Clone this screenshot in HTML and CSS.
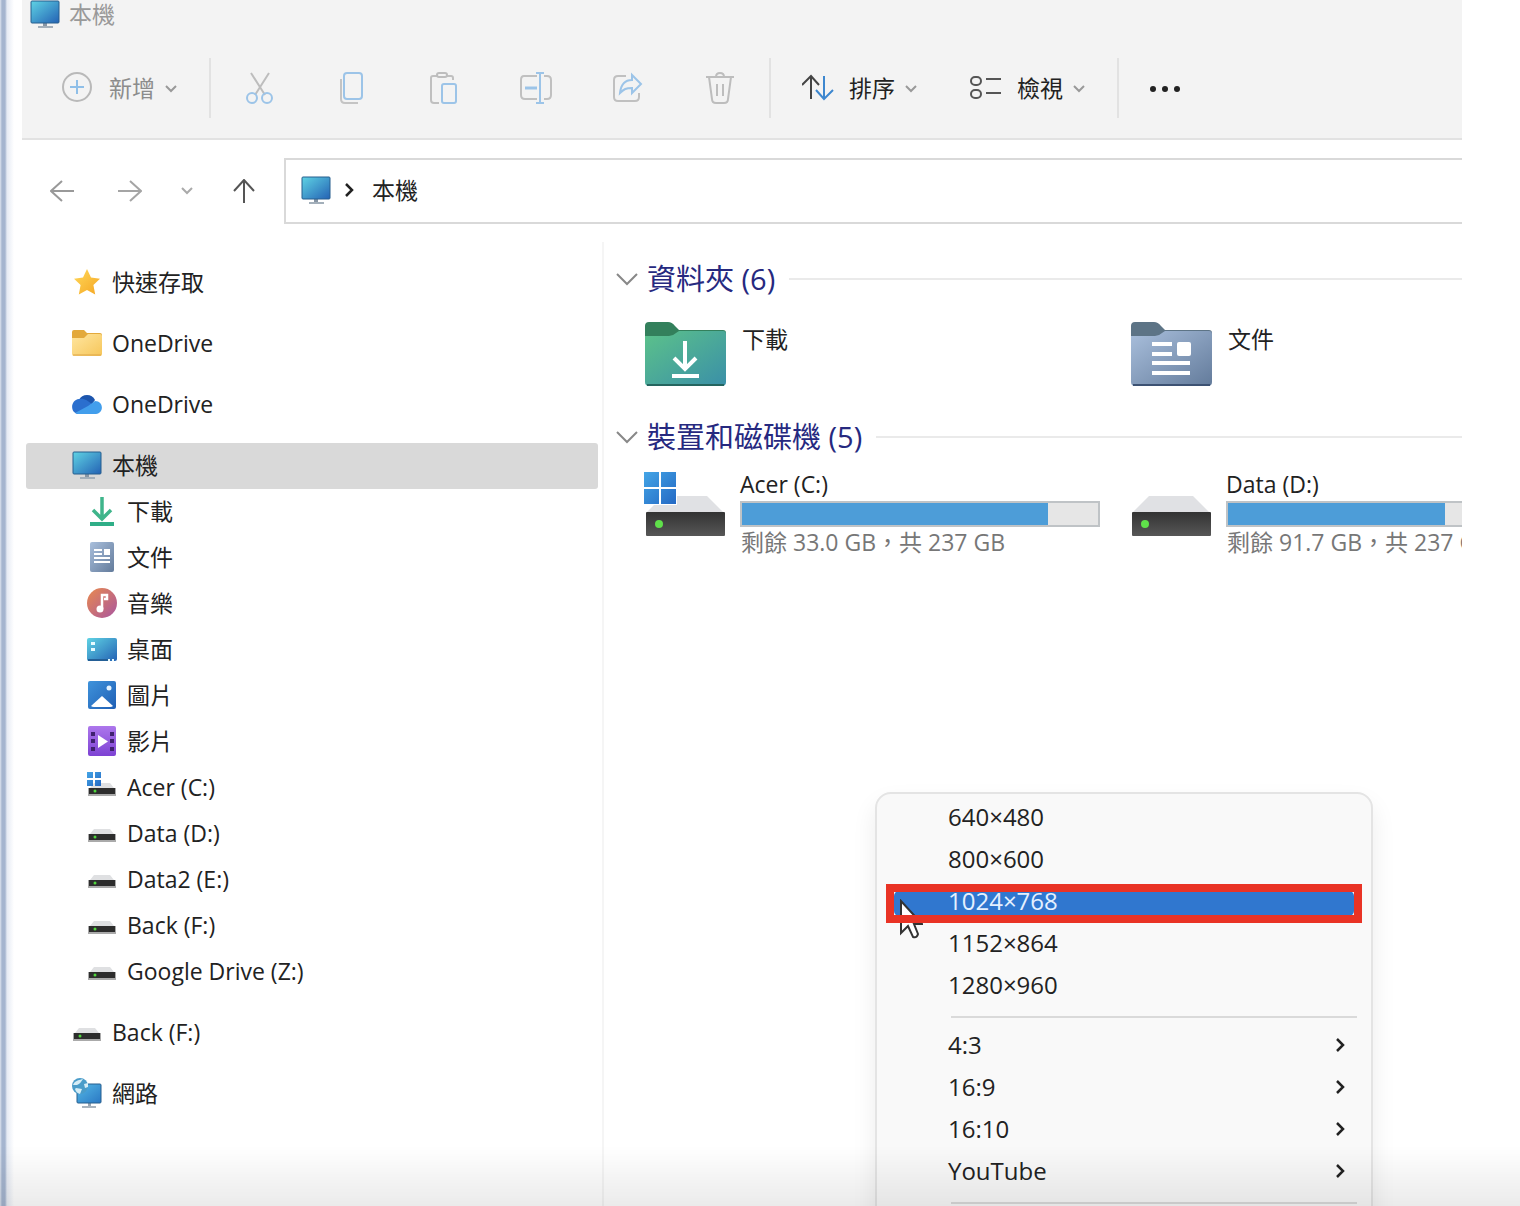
FILE: index.html
```html
<!DOCTYPE html>
<html lang="zh-Hant">
<head>
  <meta charset="UTF-8">
  <meta name="viewport" content="width=device-width, initial-scale=1.0">
  <title>本機</title>
  <link rel="stylesheet" href="styles.css">
</head>
<body>
  <!-- shared icons -->
  <svg class="sprite" aria-hidden="true">
    <defs>
      <linearGradient id="gScreen" x1="0" y1="0" x2="1" y2="1"><stop offset="0" stop-color="#5fd3e4"/><stop offset="1" stop-color="#2462b4"/></linearGradient>
      <linearGradient id="gStar" x1="0" y1="0" x2="1" y2="1"><stop offset="0" stop-color="#ffd95a"/><stop offset="1" stop-color="#f5a623"/></linearGradient>
      <linearGradient id="gFolder" x1="0" y1="0" x2="1" y2="1"><stop offset="0" stop-color="#ffe6a0"/><stop offset="1" stop-color="#f6c65a"/></linearGradient>
      <linearGradient id="gGreen" x1="0" y1="0" x2="1" y2="1"><stop offset="0" stop-color="#5cc28a"/><stop offset="1" stop-color="#3a8fa8"/></linearGradient>
      <linearGradient id="gDoc" x1="0" y1="0" x2="1" y2="1"><stop offset="0" stop-color="#a9bfdc"/><stop offset="1" stop-color="#637b9b"/></linearGradient>
      <linearGradient id="gMusic" x1="0" y1="0" x2="1" y2="1"><stop offset="0" stop-color="#e98a4e"/><stop offset="1" stop-color="#a9569f"/></linearGradient>
      <linearGradient id="gPic" x1="0" y1="0" x2="1" y2="1"><stop offset="0" stop-color="#3f93db"/><stop offset="1" stop-color="#1f5fb5"/></linearGradient>
      <linearGradient id="gNet" x1="0" y1="0" x2="1" y2="1"><stop offset="0" stop-color="#55b9e6"/><stop offset="1" stop-color="#2a78c4"/></linearGradient>
      <linearGradient id="gVideo" x1="0" y1="0" x2="0" y2="1"><stop offset="0" stop-color="#ad77ec"/><stop offset="1" stop-color="#7d42d3"/></linearGradient>
      <linearGradient id="gWin" x1="0" y1="0" x2="1" y2="1"><stop offset="0" stop-color="#44a5e6"/><stop offset="1" stop-color="#2469c4"/></linearGradient>
      <linearGradient id="gDrive" x1="0" y1="0" x2="0" y2="1"><stop offset="0" stop-color="#333"/><stop offset="1" stop-color="#575757"/></linearGradient>
    </defs>

    <symbol id="i-pc" viewBox="0 0 30 30">
      <path d="M13 24h4v4h-4z" fill="#8896a5"/><path d="M8 27h15v2H8z" fill="#a3afba"/>
      <rect x="1" y="2" width="28" height="22" rx="1" fill="url(#gScreen)" stroke="#275f8e"/>
    </symbol>
    <symbol id="i-star" viewBox="0 0 30 30">
      <path d="M15 2l4 8.500 9 1.200-6.600 6.300 1.800 9.500L15 23l-8.200 4.500L8.600 18 2 11.700l9-1.200z" fill="url(#gStar)"/>
    </symbol>
    <symbol id="i-folder" viewBox="0 0 30 30">
      <path d="M0 4q0-2 2-2h10l3 3h13q2 0 2 2v9H0z" fill="#e3a93b"/>
      <path d="M0 10h12l4-4h12q2 0 2 2v18q0 2-2 2H2q-2 0-2-2z" fill="url(#gFolder)"/><path d="M1 27h28" stroke="#dda548"/>
    </symbol>
    <symbol id="i-cloud" viewBox="0 0 30 30">
      <path d="M7 11a9 9 0 0 1 16 0l-6 8z" fill="#1c55ad"/>
      <path d="M7 10c5-1 8 1 14 6L8 25H6C-2 24-2 11 7 10z" fill="#2b6fce"/>
      <path d="M3 24l13-7 7-5c9 0 9 12 1 13H6z" fill="#429eec"/>
    </symbol>
    <symbol id="i-down" viewBox="0 0 30 30">
      <path d="M15 1v22M6 14l9 9 9-9" fill="none" stroke="#3fb58b" stroke-width="3.500"/>
      <path d="M3 28h24" stroke="#2fae87" stroke-width="4"/>
    </symbol>
    <symbol id="i-doc" viewBox="0 0 30 30">
      <rect x="3" y="0" width="24" height="30" rx="2" fill="url(#gDoc)"/>
      <path d="M7 8h8M7 12h8M7 16h16M7 20h16" stroke="#fff" stroke-width="2"/><path d="M17 7h6v6h-6z" fill="#fff"/>
    </symbol>
    <symbol id="i-music" viewBox="0 0 30 30">
      <circle cx="15" cy="15" r="15" fill="url(#gMusic)"/>
      <circle cx="13" cy="21" r="3.500" fill="#fff"/><path d="M15 21V7h5v4h-3" fill="none" stroke="#fff" stroke-width="2.500"/>
    </symbol>
    <symbol id="i-desktop" viewBox="0 0 30 30">
      <rect y="4" width="30" height="23" rx="2" fill="url(#gScreen)"/><path d="M1 26h21" stroke="#245f96" stroke-width="2"/>
      <path d="M4 8h4v3H4zM4 14h4v3H4zM21 25h2v2h-2zM25 25h2v2h-2z" fill="#e6fbff"/>
    </symbol>
    <symbol id="i-pic" viewBox="0 0 30 30">
      <rect x="1" y="1" width="28" height="28" rx="2" fill="url(#gPic)"/>
      <path d="M4 26l11-10 11 10q-1 1-3 1H7q-2 0-3-1z" fill="#fff"/><circle cx="22" cy="8" r="2.500" fill="#e4f3ff"/>
    </symbol>
    <symbol id="i-video" viewBox="0 0 30 30">
      <rect x="1" y="0" width="28" height="30" rx="2" fill="url(#gVideo)"/>
      <path d="M4 6h4v4H4zM4 13h4v4H4zM4 21h4v4H4zM23 6h4v4h-4zM23 13h4v4h-4zM23 21h4v4h-4z" fill="#40206f"/>
      <path d="M11 9l10 6.500L11 22z" fill="#fff"/>
    </symbol>
    <symbol id="i-drive" viewBox="0 0 30 30">
      <path d="M7 11h16l4 5H3z" fill="#dfe0e2"/><rect x="1" y="16" width="28" height="8" fill="#aaa"/>
      <rect x="2" y="16" width="26" height="6" fill="#2d2d2d"/><circle cx="8" cy="19" r="1.500" fill="#4fd63c"/>
    </symbol>
    <symbol id="i-sysdrive" viewBox="0 0 30 30">
      <path d="M7 11h16l4 5H3z" fill="#dfe0e2"/><rect x="1" y="16" width="28" height="8" fill="#aaa"/>
      <rect x="2" y="16" width="26" height="6" fill="#2d2d2d"/><circle cx="8" cy="19" r="1.500" fill="#4fd63c"/>
      <path d="M0 0h6v6H0zM8 0h6v6H8zM0 8h6v6H0zM8 8h6v6H8z" fill="url(#gWin)"/>
    </symbol>
    <symbol id="i-net" viewBox="0 0 30 30">
      <path d="M16 25h3v4h-3z" fill="#9aa7b4"/><path d="M10 28h14v2H10z" fill="#a9b4be"/>
      <rect x="5" y="6" width="24" height="19" rx="1" fill="url(#gNet)" stroke="#275f8e"/>
      <circle cx="8" cy="8" r="8" fill="#4a9cc9"/><path d="M1 7c2-5 7-5 10-6-2 3-3 5-6 6zM4 10l6 1-2 5q-4-1-5-5zM12 6l4-1v4l-3 1z" fill="#d5edf6"/>
    </symbol>
    <symbol id="i-chev" viewBox="0 0 14 14"><path d="M2 5l5 5 5-5" fill="none" stroke="currentColor" stroke-width="2"/></symbol>
    <symbol id="i-chev-r" viewBox="0 0 14 14"><path d="M4 1l6 6-6 6" fill="none" stroke="currentColor" stroke-width="2.500"/></symbol>
  </svg>

  <div class="window">
    <header class="ribbon">
      <div class="title"><svg class="icon"><use href="#i-pc"/></svg><span>本機</span></div>
      <div class="toolbar">
        <button class="tool disabled" type="button">
          <svg class="tool-icon" viewBox="0 0 32 32"><circle cx="15" cy="15" r="14" fill="none" stroke="#b9b9b9" stroke-width="2"/><path d="M15 8v14M8 15h14" stroke="#8fbfe8" stroke-width="2"/></svg>
          新增<svg class="chev"><use href="#i-chev"/></svg>
        </button>
        <span class="sep"></span>
        <div class="tool-group">
          <button type="button" aria-label="剪下"><svg viewBox="0 0 32 32"><path d="M7 1l14 22M25 1L11 23" stroke="#bdbdbd"/><g stroke="#9cc4e8"><circle cx="8" cy="26" r="5"/><circle cx="23" cy="26" r="5"/></g></svg></button>
          <button type="button" aria-label="複製"><svg viewBox="0 0 32 32"><path d="M5 7v20q0 4 4 4h13" stroke="#c4c4c4"/><rect x="8" y="1" width="18" height="26" rx="3" stroke="#9cc4e8"/></svg></button>
          <button type="button" aria-label="貼上"><svg viewBox="0 0 32 32"><path d="M10 4H5q-2 0-2 2v22q0 3 3 3h5M19 4h4q2 0 2 2v2" stroke="#c0c0c0"/><rect x="9" y="1" width="10" height="4" rx="2" stroke="#bdbdbd"/><rect x="14" y="12" width="14" height="19" rx="2" stroke="#9cc4e8"/></svg></button>
          <button type="button" aria-label="重新命名"><svg viewBox="0 0 32 32"><path d="M17 4H4Q1 4 1 8v15q0 4 4 4h12M24 4h3q4 0 4 4v15q0 4-4 4h-3" stroke="#c0c0c0"/><path d="M20 2v28M16 1h8M16 31h8" stroke="#9cc4e8"/><path d="M5 16h12" stroke="#9cc4e8" stroke-width="3"/></svg></button>
          <button type="button" aria-label="共用"><svg viewBox="0 0 32 32"><path d="M14 4H6Q2 4 2 8v17q0 4 4 4h17q4 0 4-4v-4" stroke="#c0c0c0"/><path d="M8 21C9 12 13 8 20 8V3l9 9-9 9v-5c-6 0-8 1-12 5z" stroke="#9cc4e8"/></svg></button>
          <button type="button" aria-label="刪除"><svg viewBox="0 0 32 32"><path d="M2 5h28M5 5l3 22q0 4 4 4h8q4 0 4-4l3-22M12 5q0-4 4-4t4 4M13 12v12M19 12v12" stroke="#bdbdbd"/></svg></button>
        </div>
        <span class="sep"></span>
        <button class="tool" type="button">
          <svg class="tool-icon" viewBox="0 0 32 32"><path d="M9 27V4M0 13l9-9 8 9" fill="none" stroke="#444" stroke-width="2"/><path d="M22 4v23M14 18l8 9 9-9" fill="none" stroke="#3d87cf" stroke-width="2"/></svg>
          排序<svg class="chev"><use href="#i-chev"/></svg>
        </button>
        <button class="tool" type="button">
          <svg class="tool-icon" viewBox="0 0 32 32"><g fill="none" stroke="#555" stroke-width="2"><rect x="1" y="5" width="10" height="8" rx="4"/><rect x="1" y="18" width="10" height="8" rx="4"/><path d="M16 7h15M16 21h15"/></g></svg>
          檢視<svg class="chev"><use href="#i-chev"/></svg>
        </button>
        <span class="sep"></span>
        <button class="tool" type="button" aria-label="更多">
          <svg class="tool-icon" viewBox="0 0 32 32"><g fill="#222"><circle cx="3" cy="17" r="3"/><circle cx="15" cy="17" r="3"/><circle cx="27" cy="17" r="3"/></g></svg>
        </button>
      </div>
    </header>

    <nav class="address-row">
      <div class="nav-buttons">
        <button type="button" aria-label="上一頁"><svg viewBox="0 0 24 24"><path d="M24 12H1M12 2L1 12l11 10" stroke="#999"/></svg></button>
        <button type="button" aria-label="下一頁"><svg viewBox="0 0 24 24"><path d="M0 12h23M12 2l11 10-11 10" stroke="#a5a5a5"/></svg></button>
        <button class="recent" type="button" aria-label="最近位置"><svg viewBox="0 0 14 14"><path d="M2 4l5 5 5-5" stroke="#aaa"/></svg></button>
        <button type="button" aria-label="上移"><svg viewBox="0 0 24 24"><path d="M12 24V1M2 12L12 1l10 11" stroke="#555"/></svg></button>
      </div>
      <div class="address"><svg class="icon"><use href="#i-pc"/></svg><svg class="crumb"><use href="#i-chev-r"/></svg><span>本機</span></div>
    </nav>

    <div class="panes">
      <aside class="sidebar">
        <a href="#"><svg class="icon"><use href="#i-star"/></svg>快速存取</a>
        <a href="#"><svg class="icon"><use href="#i-folder"/></svg>OneDrive</a>
        <a href="#"><svg class="icon"><use href="#i-cloud"/></svg>OneDrive</a>
        <div class="tree">
          <a class="selected" href="#"><svg class="icon"><use href="#i-pc"/></svg>本機</a>
          <a class="child" href="#"><svg class="icon"><use href="#i-down"/></svg>下載</a>
          <a class="child" href="#"><svg class="icon"><use href="#i-doc"/></svg>文件</a>
          <a class="child" href="#"><svg class="icon"><use href="#i-music"/></svg>音樂</a>
          <a class="child" href="#"><svg class="icon"><use href="#i-desktop"/></svg>桌面</a>
          <a class="child" href="#"><svg class="icon"><use href="#i-pic"/></svg>圖片</a>
          <a class="child" href="#"><svg class="icon"><use href="#i-video"/></svg>影片</a>
          <a class="child" href="#"><svg class="icon"><use href="#i-sysdrive"/></svg>Acer (C:)</a>
          <a class="child" href="#"><svg class="icon"><use href="#i-drive"/></svg>Data (D:)</a>
          <a class="child" href="#"><svg class="icon"><use href="#i-drive"/></svg>Data2 (E:)</a>
          <a class="child" href="#"><svg class="icon"><use href="#i-drive"/></svg>Back (F:)</a>
          <a class="child" href="#"><svg class="icon"><use href="#i-drive"/></svg>Google Drive (Z:)</a>
        </div>
        <a href="#"><svg class="icon"><use href="#i-drive"/></svg>Back (F:)</a>
        <a href="#"><svg class="icon"><use href="#i-net"/></svg>網路</a>
      </aside>

      <main class="content">
        <h2><svg viewBox="0 0 22 22"><path d="M1 6l10 10L21 6"/></svg>資料夾 (6)</h2>
        <div class="tiles folders">
          <div class="tile">
            <svg class="big" viewBox="0 0 84 68">
              <path d="M2 5q0-4 4-4h19q4 0 7 4l4 4h44q3 0 3 3v10H2z" fill="#33805c"/>
              <path d="M2 15h24q4 0 7-3l3-2h44q3 0 3 3v48q0 4-4 4H6q-4 0-4-4z" fill="url(#gGreen)"/>
              <path d="M4 64h77" stroke="#25655f" stroke-width="2"/>
              <path d="M42 20v28M31 37l11 11 11-11M29 55h27" fill="none" stroke="#fff" stroke-width="4"/>
            </svg>
            <div class="info"><span>下載</span></div>
          </div>
          <div class="tile">
            <svg class="big" viewBox="0 0 84 68">
              <path d="M2 5q0-4 4-4h19q4 0 7 4l4 4h44q3 0 3 3v10H2z" fill="#5d7486"/>
              <path d="M2 15h24q4 0 7-3l3-2h44q3 0 3 3v48q0 4-4 4H6q-4 0-4-4z" fill="url(#gDoc)"/>
              <path d="M4 64h77" stroke="#3d5273" stroke-width="2"/>
              <path d="M23 23h20M23 33h20M23 42h38M23 52h38" stroke="#fff" stroke-width="4"/><rect x="48" y="21" width="14" height="14" rx="2" fill="#fff"/>
            </svg>
            <div class="info"><span>文件</span></div>
          </div>
        </div>

        <h2><svg viewBox="0 0 22 22"><path d="M1 6l10 10L21 6"/></svg>裝置和磁碟機 (5)</h2>
        <div class="tiles drives">
          <div class="tile">
            <svg class="big" viewBox="0 0 84 68">
              <path d="M20 25h44l16 16H4z" fill="#e0e1e4"/><rect x="3" y="41" width="79" height="24" rx="1" fill="url(#gDrive)"/><circle cx="16" cy="53" r="4" fill="#5fe04a"/>
              <path d="M0 0h34v34H0z" fill="#fff"/><path d="M1 1h15v15H1zM18 1h15v15H18zM1 18h15v15H1zM18 18h15v15H18z" fill="url(#gWin)"/>
            </svg>
            <div class="info">
              <span class="name">Acer (C:)</span>
              <div class="usage"><div class="used" style="width: 86%"></div></div>
              <span class="free">剩餘 33.0 GB，共 237 GB</span>
            </div>
          </div>
          <div class="tile">
            <svg class="big" viewBox="0 0 84 68">
              <path d="M20 25h44l16 16H4z" fill="#e0e1e4"/><rect x="3" y="41" width="79" height="24" rx="1" fill="url(#gDrive)"/><circle cx="16" cy="53" r="4" fill="#5fe04a"/>
            </svg>
            <div class="info">
              <span class="name">Data (D:)</span>
              <div class="usage"><div class="used" style="width: 61%"></div></div>
              <span class="free">剩餘 91.7 GB，共 237 GB</span>
            </div>
          </div>
        </div>
      </main>
    </div>

    <!-- resolution menu -->
    <div class="menu">
      <button type="button">640×480</button>
      <button type="button">800×600</button>
      <div class="current">
        <button type="button">1024×768</button>
        <svg class="cursor" viewBox="0 0 24 40"><path d="M2 2v32l7-7 5 11q4 1 5-3l-4-10h8z" fill="#fff" stroke="#333" stroke-width="2"/></svg>
        <span class="marker"></span>
      </div>
      <button type="button">1152×864</button>
      <button type="button">1280×960</button>
      <hr>
      <button type="button">4:3<svg><use href="#i-chev-r"/></svg></button>
      <button type="button">16:9<svg><use href="#i-chev-r"/></svg></button>
      <button type="button">16:10<svg><use href="#i-chev-r"/></svg></button>
      <button type="button">YouTube<svg><use href="#i-chev-r"/></svg></button>
      <hr>
    </div>
  </div>
  <div class="bottom-shade"></div>
</body>
</html>
```
FILE: styles.css
```css
* {
  box-sizing: border-box;
}

body {
  margin: 0;
  padding: 0 58px 0 22px;
  height: 100vh;
  overflow: hidden;
  font-family: "Open Sans", "Noto Sans CJK TC", sans-serif;
  font-size: 23px;
  line-height: 30px;
  color: #222;
  background: linear-gradient(90deg, #dde4ef 0, #a5b5cf 2px, #a5b5cf 5px, #e6ebf4 7px, #fff 14px);
}

button {
  border: 0;
  padding: 0;
  background: none;
  font: inherit;
  color: inherit;
}

svg {
  display: block;
  flex: none;
}

.sprite {
  position: absolute;
  width: 0;
  height: 0;
}

.icon {
  width: 30px;
  height: 30px;
}

.window {
  position: relative;
  height: 100%;
  overflow: hidden;
}

/* ---- ribbon ---- */
.ribbon {
  background: #f3f3f3;
  border-bottom: 2px solid #e2e2e2;
}

.title {
  display: flex;
  align-items: center;
  gap: 9px;
  height: 28px;
  padding-left: 8px;
  line-height: 26px;
  color: #999;
}

.toolbar {
  display: flex;
  align-items: center;
  height: 110px;
  padding: 10px 0 0 14px;
}

.tool {
  display: flex;
  align-items: center;
  gap: 15px;
  padding: 0 26px;
  white-space: nowrap;
}

.tool.disabled {
  color: #8c8c8c;
}

.tool-icon {
  width: 32px;
  height: 32px;
}

.chev {
  width: 14px;
  height: 14px;
  margin-left: -6px;
  color: #999;
}

.sep {
  width: 2px;
  height: 60px;
  margin: 0 5px;
  background: #e2e2e2;
}

.tool-group {
  display: flex;
  margin: 0 -2px;
}

.tool-group button {
  display: flex;
  justify-content: center;
  width: 92px;
}

.tool-group svg {
  width: 32px;
  height: 32px;
  fill: none;
  stroke-width: 2;
}

/* ---- address bar ---- */
.address-row {
  display: flex;
  padding: 18px 0;
}

.nav-buttons {
  display: flex;
  align-items: center;
  gap: 44px;
  width: 262px;
  padding-left: 28px;
}

.nav-buttons svg {
  width: 24px;
  height: 24px;
  fill: none;
  stroke-width: 2;
}

.nav-buttons .recent {
  margin: 0 -6px;
}

.nav-buttons .recent svg {
  width: 14px;
  height: 14px;
}

.address {
  flex: 1;
  display: flex;
  align-items: center;
  height: 66px;
  padding: 0 0 2px 15px;
  border: 2px solid #d9d9d9;
  border-right: 0;
}

.crumb {
  width: 14px;
  height: 14px;
  margin: 0 16px 0 11px;
}

/* ---- sidebar ---- */
.panes {
  display: flex;
}

.sidebar {
  flex: none;
  display: flex;
  flex-direction: column;
  gap: 15px;
  width: 582px;
  padding: 18px 4px 120px;
  border-right: 2px solid #f5f5f5;
}

.sidebar a {
  display: flex;
  align-items: center;
  gap: 10px;
  height: 46px;
  padding: 0 0 2px 46px;
  border-radius: 3px;
  color: inherit;
  text-decoration: none;
}

.sidebar .child {
  padding-left: 61px;
}

.sidebar .selected {
  background: #d9d9d9;
}

/* ---- folders and drives ---- */
.content {
  flex: 1;
  min-width: 0;
  padding: 17px 0 0 12px;
}

.content h2 {
  display: flex;
  align-items: center;
  gap: 9px;
  margin: 0;
  font-size: 29px;
  font-weight: 400;
  line-height: 40px;
  color: #26297f;
  white-space: nowrap;
}

.content h2::after {
  content: "";
  flex: 1;
  height: 2px;
  margin-left: 5px;
  background: #eaeaea;
}

.content h2 svg {
  width: 22px;
  height: 22px;
  fill: none;
  stroke: #888;
  stroke-width: 2;
}

.tiles {
  display: grid;
  grid-template-columns: 486px 486px;
  padding-left: 27px;
}

.folders {
  padding-top: 22px;
  padding-bottom: 28px;
}

.drives {
  padding-top: 14px;
}

.tile {
  display: flex;
  gap: 13px;
}

.big {
  width: 84px;
  height: 68px;
}

.info {
  display: flex;
  flex-direction: column;
  width: 360px;
  white-space: nowrap;
}

.folders .info {
  padding: 3px 0 0 2px;
}

.name {
  margin-bottom: 4px;
  line-height: 26px;
}

.usage {
  height: 26px;
  border: 2px solid #bfc3c6;
  background: #e6e6e6;
}

.used {
  height: 100%;
  background: #4d9dd8;
}

.free {
  padding-left: 1px;
  color: #777;
}

/* ---- context menu ---- */
.menu {
  position: absolute;
  top: 792px;
  right: 89px;
  width: 498px;
  height: 460px;
  padding-top: 2px;
  background: #f9f9f9;
  border: 2px solid #e4e4e4;
  border-radius: 16px;
  box-shadow: 0 12px 24px rgba(0, 0, 0, 0.08);
  font-size: 24px;
}

.menu button {
  display: flex;
  align-items: center;
  justify-content: space-between;
  width: 100%;
  height: 42px;
  padding: 0 24px 0 71px;
}

.menu button svg {
  width: 14px;
  height: 14px;
}

.menu hr {
  height: 2px;
  margin: 10px 14px 6px 74px;
  border: 0;
  background: #dadada;
}

.current {
  position: relative;
  color: #e4f0ff;
}

.current button {
  position: relative;
}

.current::before {
  content: "";
  position: absolute;
  inset: 11px 17px 6px;
  border-radius: 5px;
  background: #3077cf;
}

.cursor {
  position: absolute;
  left: 22px;
  top: 19px;
  width: 24px;
  height: 40px;
  z-index: 1;
}

/* red frame round the chosen resolution */
.marker {
  position: absolute;
  inset: 4px 9px -1px;
  border: 8px solid #e93325;
  z-index: 2;
}

.bottom-shade {
  position: fixed;
  left: 0;
  right: 0;
  bottom: 0;
  height: 60px;
  background: linear-gradient(transparent, rgba(0, 0, 0, 0.08));
  pointer-events: none;
}
```
